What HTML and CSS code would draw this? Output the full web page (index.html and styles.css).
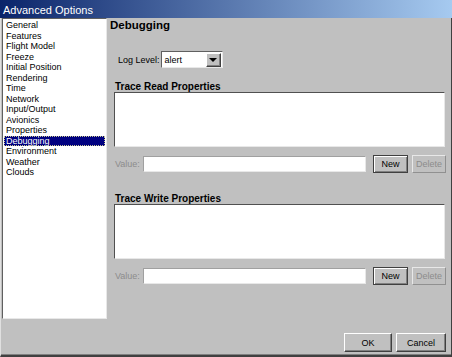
FILE: index.html
```html
<!DOCTYPE html>
<html lang="en">
<head>
    <meta charset="UTF-8">
    <meta name="viewport" content="width=device-width, initial-scale=1.0">
    <title>Advanced Options</title>
    <link rel="stylesheet" href="styles.css">
</head>
<body>
    <div class="dialog">
        <div class="titlebar">Advanced Options</div>
        <div class="frame">
            <div class="main">
                <ul class="page-list">
                    <li>General</li>
                    <li>Features</li>
                    <li>Flight Model</li>
                    <li>Freeze</li>
                    <li>Initial Position</li>
                    <li>Rendering</li>
                    <li>Time</li>
                    <li>Network</li>
                    <li>Input/Output</li>
                    <li>Avionics</li>
                    <li>Properties</li>
                    <li class="selected">Debugging</li>
                    <li>Environment</li>
                    <li>Weather</li>
                    <li>Clouds</li>
                </ul>

                <div class="panel">
                    <h2 class="panel-title">Debugging</h2>

                    <div class="log-row">
                        <span class="label">Log Level:</span>
                        <div class="combo">
                            <span class="combo-value">alert</span>
                            <span class="combo-arrow"><span class="triangle"></span></span>
                        </div>
                    </div>

                    <div class="trace">
                        <h3 class="trace-title">Trace Read Properties</h3>
                        <div class="trace-box"></div>
                        <div class="value-row">
                            <span class="label disabled">Value:</span>
                            <div class="value-input"></div>
                            <button class="btn btn-default btn-new">New</button>
                            <button class="btn btn-disabled btn-delete">Delete</button>
                        </div>
                    </div>

                    <div class="trace trace-second">
                        <h3 class="trace-title">Trace Write Properties</h3>
                        <div class="trace-box"></div>
                        <div class="value-row">
                            <span class="label disabled">Value:</span>
                            <div class="value-input"></div>
                            <button class="btn btn-default btn-new">New</button>
                            <button class="btn btn-disabled btn-delete">Delete</button>
                        </div>
                    </div>
                </div>
            </div>

            <div class="footer">
                <button class="btn btn-ok">OK</button>
                <button class="btn btn-cancel">Cancel</button>
            </div>
        </div>
    </div>
</body>
</html>
```

FILE: styles.css
```css
body {
    margin: 0;
    font-family: "Liberation Sans", Arial, sans-serif;
    font-size: 9px;
    color: #000;
    background-color: #c0c0c0;
}
.dialog {
    width: 452px;
    height: 357px;
    background-color: #c0c0c0; /* panel grey */
    overflow: hidden;
}
.titlebar {
    height: 18px;
    box-sizing: border-box;
    padding: 3px 0 0 3px;
    line-height: 15px;
    font-size: 11px;
    color: #fff;
    background: linear-gradient(to right, #0a246a, #a6caf0);
}
.frame {
    height: 339px;
    box-sizing: border-box;
    border-left: 1px solid #e0e0e0;
    border-right: 1px solid #404040;
    border-bottom: 2px solid #404040;
    box-shadow: inset 0 -1px #808080;
    display: flex;
    flex-direction: column;
}
.main {
    height: 302px;
    display: flex;
}

/* left page list */
.page-list {
    list-style: none;
    margin: 0 0 0 1px;
    padding: 1px 1px 0 1px;
    width: 105px;
    height: 301px;
    box-sizing: border-box;
    background-color: #fff;
    border: 1px solid;
    border-color: #606060 #e8e8e8 #e8e8e8 #606060;
}
.page-list li {
    line-height: 10.5px;
    height: 10.5px;
    padding-left: 2px;
    white-space: nowrap;
}
.page-list li.selected {
    background-color: #000080;
    color: #fff;
    outline: 1px dotted #c8c890;
    outline-offset: -1px;
}

/* right panel */
.panel {
    flex: 1;
    margin: 0 5px 0 1px;
}
.panel-title {
    margin: 0;
    font-size: 11.5px;
    line-height: 14px;
    font-weight: bold;
    padding-left: 2px;
}
.log-row {
    margin-top: 19px;
    padding-left: 10px;
    display: flex;
    align-items: center;
    gap: 1px;
    height: 17px;
}
.label {
    white-space: nowrap;
}
.label.disabled {
    color: #8c8c8c;
}
.combo {
    width: 62px;
    height: 17px;
    box-sizing: border-box;
    background-color: #fff;
    border: 1px solid;
    border-color: #606060 #e8e8e8 #e8e8e8 #606060;
    display: flex;
    align-items: center;
}
.combo-value {
    flex: 1;
    padding-left: 3px;
}
.combo-arrow {
    width: 15px;
    height: 14px;
    margin-right: 1px;
    box-sizing: border-box;
    background-color: #c0c0c0;
    border: 1px solid;
    border-color: #fff #404040 #404040 #fff;
    box-shadow: inset -1px -1px #808080;
    display: flex;
    align-items: center;
    justify-content: center;
}
.triangle {
    width: 0;
    height: 0;
    border-left: 4px solid transparent;
    border-right: 4px solid transparent;
    border-top: 4px solid #000;
}

/* trace sections */
.trace {
    margin-top: 13px;
    padding-left: 6px;
}
.trace-second {
    margin-top: 20px;
}
.trace-title {
    margin: 0;
    font-size: 10px;
    line-height: 11px;
    font-weight: bold;
    padding-left: 1px;
}
.trace-box {
    height: 55px;
    margin-right: 1px;
    box-sizing: border-box;
    background-color: #fff;
    border: 1px solid;
    border-color: #505050 #e8e8e8 #e8e8e8 #505050;
}
.value-row {
    margin-top: 8px;
    height: 18px;
    display: flex;
    align-items: center;
    padding-left: 1px;
}
.value-input {
    flex: 1;
    height: 16px;
    margin: 0 7px 0 3px;
    box-sizing: border-box;
    background-color: #fff;
    border: 1px solid;
    border-color: #a0a0a0 #e8e8e8 #e8e8e8 #a0a0a0;
}

/* buttons */
.btn {
    font-family: "Liberation Sans", Arial, sans-serif;
    font-size: 9px;
    color: #000;
    background-color: #c0c0c0;
    padding: 0;
    height: 19px;
    box-sizing: border-box;
    border: 1px solid;
    border-color: #fff #404040 #404040 #fff;
    box-shadow: inset -1px -1px #808080;
}
.btn-default {
    border-color: #404040;
    box-shadow: inset 1px 1px #fff, inset -1px -1px #808080;
}
.btn-disabled {
    color: #8c8c8c;
    border-color: #e8e8e8 #909090 #909090 #e8e8e8;
    box-shadow: none;
}
.btn-new {
    width: 35px;
    height: 18px;
}
.btn-delete {
    width: 34px;
    height: 18px;
    margin-left: 4px;
}
.footer {
    flex: 1;
    display: flex;
    justify-content: flex-end;
    align-items: flex-start;
    gap: 4px;
    padding: 13px 5px 0 0;
}
.btn-ok {
    width: 48px;
}
.btn-cancel {
    width: 50px;
}
```
